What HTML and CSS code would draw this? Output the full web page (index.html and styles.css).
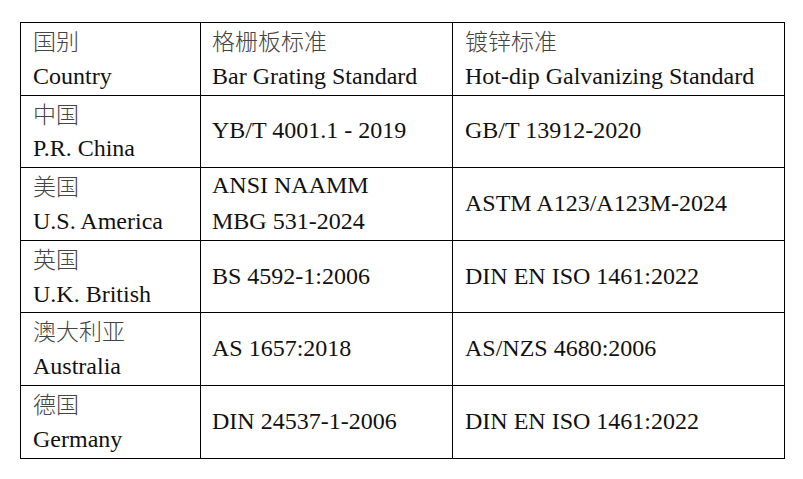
FILE: index.html
```html
<!DOCTYPE html>
<html lang="zh">
<head>
<meta charset="utf-8">
<link rel="stylesheet" href="styles.css">
</head>
<body>
<table class="std">
  <colgroup>
    <col class="c1"><col class="c2"><col class="c3">
  </colgroup>
  <tr>
    <td><div class="ln zh">国别</div><div class="ln">Country</div></td>
    <td><div class="ln zh">格栅板标准</div><div class="ln">Bar Grating Standard</div></td>
    <td><div class="ln zh">镀锌标准</div><div class="ln">Hot-dip Galvanizing Standard</div></td>
  </tr>
  <tr>
    <td><div class="ln zh">中国</div><div class="ln">P.R. China</div></td>
    <td><div class="ln">YB/T 4001.1 - 2019</div></td>
    <td><div class="ln">GB/T 13912-2020</div></td>
  </tr>
  <tr>
    <td><div class="ln zh">美国</div><div class="ln">U.S. America</div></td>
    <td><div class="ln">ANSI NAAMM</div><div class="ln">MBG 531-2024</div></td>
    <td><div class="ln">ASTM A123/A123M-2024</div></td>
  </tr>
  <tr>
    <td><div class="ln zh">英国</div><div class="ln">U.K. British</div></td>
    <td><div class="ln">BS 4592-1:2006</div></td>
    <td><div class="ln">DIN EN ISO 1461:2022</div></td>
  </tr>
  <tr>
    <td><div class="ln zh">澳大利亚</div><div class="ln">Australia</div></td>
    <td><div class="ln">AS 1657:2018</div></td>
    <td><div class="ln">AS/NZS 4680:2006</div></td>
  </tr>
  <tr>
    <td><div class="ln zh">德国</div><div class="ln">Germany</div></td>
    <td><div class="ln">DIN 24537-1-2006</div></td>
    <td><div class="ln">DIN EN ISO 1461:2022</div></td>
  </tr>
</table>
</body>
</html>
```
FILE: styles.css
```css
html, body {
  margin: 0;
  padding: 0;
  background: #ffffff;
}
body {
  padding: 22px 0 0 20px;
  font-family: "Liberation Serif", "Noto Sans CJK SC", serif;
  font-size: 24px;
  color: #111111;
}
.std {
  border-collapse: collapse;
  table-layout: fixed;
  width: 764px;
}
.c1 { width: 180px; }
.c2 { width: 252px; }
.c3 { width: 332px; }
.std td {
  border: 1px solid #000000;
  padding: 0 0 0 12px;
  height: 71.6px;
  vertical-align: middle;
  white-space: nowrap;
}
.std td:nth-child(2) { padding-left: 11px; }
.ln {
  height: 35.8px;
  line-height: 35.8px;
  overflow: hidden;
}
.zh {
  font-family: "Noto Sans CJK SC", sans-serif;
  font-weight: 300;
  font-size: 23px;
  color: #444444;
}
```
